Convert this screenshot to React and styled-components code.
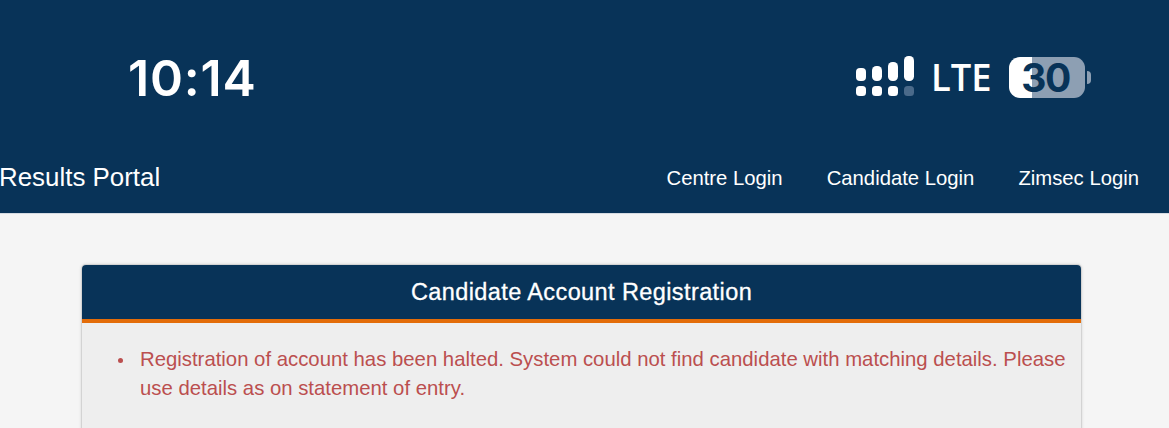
import React from "react";
import styled, { createGlobalStyle } from "styled-components";

const Global = createGlobalStyle`
  html, body { margin: 0; padding: 0; background: #f5f5f5; }
  body { font-family: "Liberation Sans", Arial, sans-serif; overflow: hidden; }
`;
const Page = styled.div`width: 1169px; height: 428px; overflow: hidden; background: #f5f5f5;`;
const Header = styled.header`
  height: 213px; background: #083358; display: flex; flex-direction: column;
  border-bottom: 1px solid #d5dbe2; box-sizing: content-box;
`;
const StatusBar = styled.div`
  height: 144px; display: flex; justify-content: space-between; align-items: flex-start;
  padding: 48px 78px 0 128px; box-sizing: border-box;
`;
const Clock = styled.div`
  font-family: Inter, "Liberation Sans", sans-serif; font-size: 50px; font-weight: 600;
  line-height: 60px; color: #fff; letter-spacing: 0.8px;
`;
const StatusRight = styled.div`display: flex; align-items: center; margin-top: 8px; height: 42px;`;
const Lte = styled.div`
  font-family: "Open Sans", sans-serif; font-size: 37px; font-weight: 600; line-height: 42px;
  color: #fff; margin: 0 19px 0 17px; letter-spacing: 0;
  transform: scaleX(.98); transform-origin: left center; width: 59px;
`;
const Battery = styled.div`
  width: 76px; height: 41px; border-radius: 11px; display: flex; align-items: center; justify-content: center;
  background: linear-gradient(90deg, #fff 0 30%, #8d9fb3 30% 100%);
  font-family: Inter, sans-serif; font-weight: 700; font-size: 39px; color: #083358; letter-spacing: -1.5px;
  padding-right: 3px; box-sizing: border-box;
`;
const BatteryCap = styled.div`
  width: 4px; height: 13px; margin-left: 2px; border-radius: 0 7px 7px 0; background: #8d9fb3;
`;
const NavBar = styled.nav`
  flex: 1; display: flex; justify-content: space-between; align-items: center; padding: 0 30px 2px 0; margin-top: -1px;
`;
const Brand = styled.div`font-size: 25.9px; line-height: 32px; color: #fff; margin-left: -1px;`;
const NavLinks = styled.div`display: flex; gap: 44px; margin-top: 1px;`;
const NavLink = styled.a`font-size: 20.3px; line-height: 28px; color: #fff;`;
const Main = styled.main`padding: 50px 87px 0 81px;`;
const Card = styled.section`
  border: 1px solid #d3d3d3; border-bottom: 0; border-radius: 5px 5px 0 0; background: #eeeeee;
  box-shadow: 0 0 3px rgba(0,0,0,.12); height: 200px;
`;
const CardHeader = styled.h2`
  margin: 0; height: 54px; background: #083358; border-bottom: 4px solid #e36c09;
  border-radius: 4px 4px 0 0; display: flex; align-items: center; justify-content: center;
  color: #fff; font-size: 23.5px; font-weight: 400; letter-spacing: 0.4px; -webkit-text-stroke: .3px #fff;
`;
const Errors = styled.ul`
  margin: 0; padding: 22px 10px 0 36px; color: #bb4f4f; font-size: 20.34px; line-height: 29px; list-style: none;
`;
const ErrorItem = styled.li`
  display: flex;
  &::before {
    content: ""; flex: none; width: 5px; height: 5px; margin: 13px 17px 0 0;
    border-radius: 50%; background: #bb4f4f;
  }
`;

const Signal = () => (
  <svg width="58" height="42" viewBox="0 0 58 42" fill="#fff">
    <rect x="0" y="12" width="10" height="13" rx="4" />
    <rect x="16" y="10" width="10" height="15" rx="4.5" />
    <rect x="32" y="6" width="10" height="19" rx="4.5" />
    <rect x="48" y="0" width="10" height="25" rx="4.5" />
    <rect x="0" y="30" width="10" height="10" rx="3.5" />
    <rect x="16" y="30" width="10" height="10" rx="3.5" />
    <rect x="32" y="30" width="10" height="10" rx="3.5" />
    <rect x="48" y="30" width="10" height="10" rx="3.5" fill="#4a6a8a" />
  </svg>
);

export default function App() {
  return (
    <Page>
      <Global />
      <Header>
        <StatusBar>
          <Clock>10:14</Clock>
          <StatusRight>
            <Signal />
            <Lte>LTE</Lte>
            <Battery>30</Battery>
            <BatteryCap />
          </StatusRight>
        </StatusBar>
        <NavBar>
          <Brand>Results Portal</Brand>
          <NavLinks>
            <NavLink>Centre Login</NavLink>
            <NavLink>Candidate Login</NavLink>
            <NavLink>Zimsec Login</NavLink>
          </NavLinks>
        </NavBar>
      </Header>
      <Main>
        <Card>
          <CardHeader>Candidate Account Registration</CardHeader>
          <Errors>
            <ErrorItem><span>Registration of account has been halted. System could not find candidate with matching details. Please use details as on statement of entry.</span></ErrorItem>
          </Errors>
        </Card>
      </Main>
    </Page>
  );
}
